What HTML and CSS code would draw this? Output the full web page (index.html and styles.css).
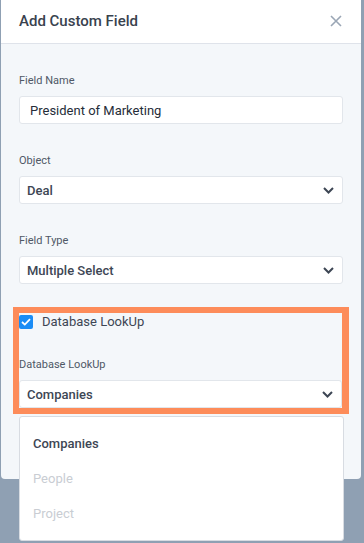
FILE: index.html
```html
<!DOCTYPE html>
<html>
<head>
<meta charset="utf-8">
<link rel="stylesheet" href="styles.css">
</head>
<body>
<div class="stage">
  <div class="modal">
    <div class="modal-header">
      <span class="title">Add Custom Field</span>
      <svg class="close" width="12" height="12" viewBox="0 0 12 12"><path d="M1 1L11 11M11 1L1 11" stroke="#9aa6b5" stroke-width="1.6" fill="none"/></svg>
    </div>
    <div class="modal-body">
      <div class="field">
        <div class="label">Field Name</div>
        <div class="control input">President of Marketing</div>
      </div>
      <div class="field">
        <div class="label">Object</div>
        <div class="control select"><span>Deal</span><svg class="chev" width="11" height="7" viewBox="0 0 11 7"><path d="M1 1L5.5 5.5L10 1" stroke="#3d4654" stroke-width="2" fill="none"/></svg></div>
      </div>
      <div class="field">
        <div class="label">Field Type</div>
        <div class="control select"><span>Multiple Select</span><svg class="chev" width="11" height="7" viewBox="0 0 11 7"><path d="M1 1L5.5 5.5L10 1" stroke="#3d4654" stroke-width="2" fill="none"/></svg></div>
      </div>
      <div class="highlight">
        <div class="check-row">
          <span class="checkbox"><svg width="10" height="8" viewBox="0 0 10 8"><path d="M1 4L3.8 6.6L9 1.2" stroke="#fff" stroke-width="1.8" fill="none"/></svg></span>
          <span class="check-label">Database LookUp</span>
        </div>
        <div class="label db-label">Database LookUp</div>
        <div class="control select"><span>Companies</span><svg class="chev" width="11" height="7" viewBox="0 0 11 7"><path d="M1 1L5.5 5.5L10 1" stroke="#3d4654" stroke-width="2" fill="none"/></svg></div>
      </div>
    </div>
  </div>
  <div class="menu">
    <div class="menu-item active">Companies</div>
    <div class="menu-item">People</div>
    <div class="menu-item">Project</div>
  </div>
</div>
</body>
</html>
```
FILE: styles.css
```css
* { box-sizing: border-box; }
html, body { margin: 0; padding: 0; }
body {
  background: #8fa0b3;
  font-family: Roboto, "Liberation Sans", sans-serif;
  width: 364px;
  height: 543px;
  overflow: hidden;
}
.stage { position: relative; width: 364px; height: 543px; }
.modal {
  margin-left: 1px;
  width: 360px;
  height: 479px;
  background: #f4f7fa;
  border-radius: 0 0 4px 4px;
}
.modal-header {
  height: 44px;
  background: #fff;
  border-bottom: 1px solid #dfe3ea;
  display: flex;
  align-items: center;
  justify-content: space-between;
  padding: 0 19px 0 18px;
}
.title {
  font-size: 15px;
  font-weight: 500;
  color: #39424e;
  margin-top: -2px;
}
.close { margin-top: -1px; }
.modal-body { padding: 29px 18px 0 18px; }
.field { margin-bottom: 29px; }
.label {
  font-size: 11px;
  line-height: 15px;
  color: #4f5866;
  margin-bottom: 8px;
}
.control {
  height: 28px;
  background: #fff;
  border: 1px solid #e2e6eb;
  border-radius: 3px;
  display: flex;
  align-items: center;
  font-size: 13px;
}
.input { padding-left: 10px; color: #252d38; }
.select {
  padding: 0 8px 0 7px;
  justify-content: space-between;
  color: #3d4654;
  font-weight: 500;
}
.chev { margin-top: 1px; }
.highlight {
  margin: -6px -6px 0 -6px;
  border: 6px solid #fd8c5a;
  border-right-width: 7px;
  padding: 0;
}
.check-row {
  height: 16px;
  display: flex;
  align-items: center;
  margin-bottom: 28px;
}
.checkbox {
  width: 14px;
  height: 14px;
  background: #1a8cf5;
  border-radius: 2px;
  display: flex;
  align-items: center;
  justify-content: center;
  margin-top: 1px;
  margin-right: 9px;
}
.check-label {
  font-size: 13px;
  font-weight: 400;
  color: #3d4654;
}
.db-label { margin-bottom: 8px; }
.highlight .select { height: 28px; }
.menu {
  position: absolute;
  left: 19px;
  top: 416px;
  width: 325px;
  height: 125px;
  background: #fff;
  border: 1px solid #d8dce2;
  border-radius: 3px;
  padding-top: 9px;
}
.menu-item {
  height: 35px;
  line-height: 35px;
  padding-left: 13px;
  font-size: 13px;
  color: #c9cdd3;
}
.menu-item.active { color: #3d4654; font-weight: 500; }
```
